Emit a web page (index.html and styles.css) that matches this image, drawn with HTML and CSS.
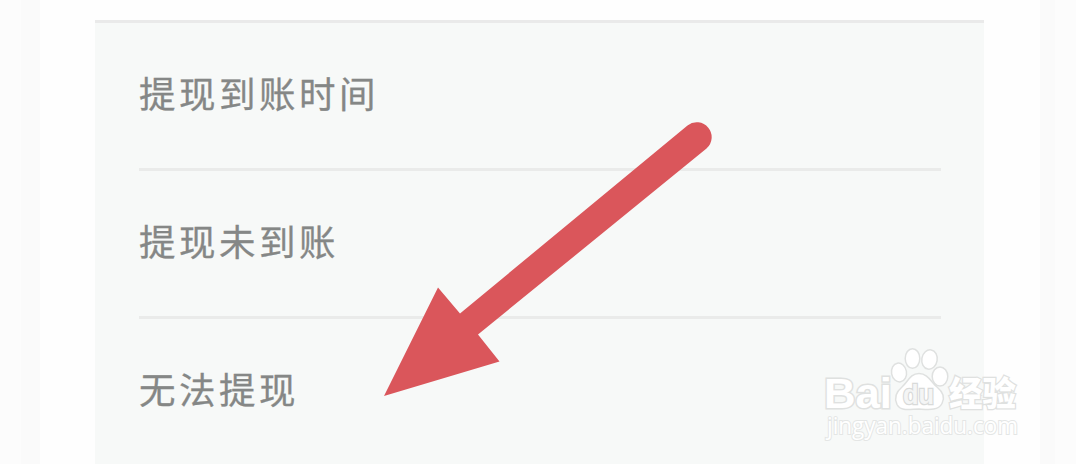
FILE: index.html
```html
<!DOCTYPE html>
<html lang="zh-CN">
<head>
  <meta charset="UTF-8" />
  <meta name="viewport" content="width=device-width, initial-scale=1.0"/>
  <title>提现帮助</title>
  <link rel="stylesheet" href="styles.css">
</head>
<body>

<div class="page">
  <ul class="help-list">
    <li class="help-item">提现到账时间</li>
    <li class="help-item">提现未到账</li>
    <li class="help-item">无法提现</li>
  </ul>
</div>

<svg class="overlay" viewBox="0 0 1076 464">
  <!-- arrow -->
  <path class="arrow" d="M384 396 L438 287.5 L460 313.5 L687.5 125.4 A15 15 0 0 1 706.5 148.6 L478 334.5 L499.5 361.5 Z"/>

  <!-- watermark -->
  <g class="mark">
    <text class="mark-latin" x="824" y="408" textLength="68" lengthAdjust="spacingAndGlyphs">Bai</text>
    <ellipse cx="899" cy="372.5" rx="7.5" ry="9.5" transform="rotate(-10 899 372.5)"/>
    <ellipse cx="912.5" cy="358.5" rx="7.3" ry="9.8"/>
    <ellipse cx="929.5" cy="359.5" rx="7.7" ry="9.7" transform="rotate(10 929.5 359.5)"/>
    <ellipse cx="940" cy="376.5" rx="7.8" ry="9.5"/>
    <path d="M919 373.5 C928 373.5 931 382 937 387 C943 392 945 398 942 403.5 C938 411 928 409.5 919 409 C911 409 901 412 897 404.5 C894 398 896 392 902 387 C908 382 910 373.5 919 373.5 Z"/>
    <text class="mark-du" x="903" y="404" textLength="31" lengthAdjust="spacingAndGlyphs">du</text>
    <text class="mark-cn" x="949" y="406" textLength="67" lengthAdjust="spacingAndGlyphs">经验</text>
    <text class="mark-url" x="827" y="434" textLength="191" lengthAdjust="spacingAndGlyphs">jingyan.baidu.com</text>
  </g>
</svg>

</body>
</html>
```
FILE: styles.css
```css
body {
  margin: 0;
  height: 464px;
  overflow: hidden;
  background-color: #fcfcfc;
  font-family: "Noto Sans CJK SC", sans-serif;
}

.page {
  box-sizing: border-box;
  height: 464px;
  margin: 0 21px;
  padding: 20px 56px 0 55px;
  background-color: #fefefe;
  border-left: 19px solid #fafafa;
  border-right: 15px solid #fafafa;
}

.help-list {
  box-sizing: border-box;
  height: 444px;
  margin: 0;
  padding: 0 43px 0 44px;
  list-style: none;
  background-color: #f7f9f8;
  border-top: 3px solid #eaeaea;
}

.help-item {
  box-sizing: border-box;
  height: 148px;
  border-bottom: 3px solid #eaebea;
  color: #858786;
  font-size: 36.5px;
  letter-spacing: 3.5px;
  line-height: 139px;
  -webkit-text-stroke: 0.3px #858786;
}

.overlay {
  position: absolute;
  top: 0;
  left: 0;
  width: 1076px;
  height: 464px;
}

.arrow {
  fill: #da565b;
}

.mark {
  fill: #fff;
  stroke: #dfe1e0;
  stroke-width: 1.5px;
}

.mark text {
  paint-order: stroke;
  stroke-width: 2.5px;
}

.mark .mark-latin {
  font: bold 43px "Liberation Sans", sans-serif;
  stroke-width: 3px;
}

.mark .mark-du {
  font: bold 27px "Liberation Sans", sans-serif;
  fill: #f4f5f5;
  stroke: #d8dad9;
}

.mark-cn {
  font: 900 34px "Noto Sans CJK SC", sans-serif;
}

.mark .mark-url {
  font: 23px "Open Sans", sans-serif;
  stroke: #e4e6e5;
  stroke-width: 2px;
}
```
